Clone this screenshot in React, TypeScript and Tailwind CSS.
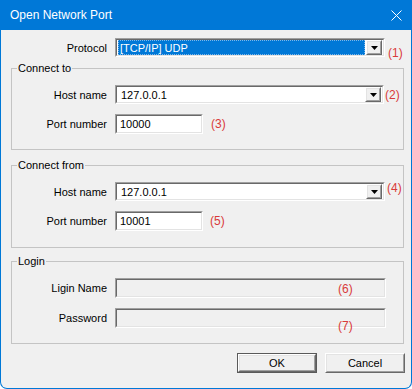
import React from "react";

const RED = "text-[#d93a3a]";
const LINE = "border-[#c4c4c4]";

function Sunken({
  className = "",
  innerClass = "bg-white",
  children,
}: {
  className?: string;
  innerClass?: string;
  children?: React.ReactNode;
}) {
  return (
    <div
      className={`border border-t-[#a0a0a0] border-l-[#a0a0a0] border-b-white border-r-white ${className}`}
    >
      <div
        className={`relative h-full w-full border border-t-[#696969] border-l-[#696969] border-b-[#e3e3e3] border-r-[#e3e3e3] ${innerClass}`}
      >
        {children}
      </div>
    </div>
  );
}

function Raised({
  className = "",
  children,
}: {
  className?: string;
  children?: React.ReactNode;
}) {
  return (
    <div
      className={`border border-t-white border-l-white border-b-[#696969] border-r-[#696969] bg-[#f0f0f0] ${className}`}
    >
      <div className="h-full w-full border border-t-[#e3e3e3] border-l-[#e3e3e3] border-b-[#a0a0a0] border-r-[#a0a0a0] flex items-center justify-center">
        {children}
      </div>
    </div>
  );
}

function DropBtn() {
  return (
    <Raised className="w-[16px] h-[15px] shrink-0">
      <svg width="7" height="4" viewBox="0 0 7 4">
        <polygon points="0,0 7,0 3.5,4" fill="#000" />
      </svg>
    </Raised>
  );
}

function Combo({
  value,
  selected = false,
  className = "",
}: {
  value: string;
  selected?: boolean;
  className?: string;
}) {
  return (
    <Sunken className={className}>
      <div className="flex h-full items-center pl-[1px] pr-[1px]">
        {selected ? (
          <div className="flex-1 h-[15px] bg-[#0078d7] text-white flex items-center pl-[1px] border border-dotted border-[#7fb7e8]">
            {value}
          </div>
        ) : (
          <div className="flex-1 pl-[3px]">{value}</div>
        )}
        <div className="ml-[1px]">
          <DropBtn />
        </div>
      </div>
    </Sunken>
  );
}

function Label({ children }: { children: React.ReactNode }) {
  return <div className="w-[95px] shrink-0 text-right">{children}</div>;
}

function Group({
  title,
  className = "",
  bodyClass = "",
  children,
}: {
  title: string;
  className?: string;
  bodyClass?: string;
  children: React.ReactNode;
}) {
  return (
    <div className={`flex flex-col ${className}`}>
      <div className="flex h-[14px]">
        <div className={`w-[6px] h-[7px] self-end border-l border-t ${LINE}`} />
        <div className="px-[1px] leading-[14px]">{title}</div>
        <div className={`flex-1 h-[7px] self-end border-r border-t ${LINE}`} />
      </div>
      <div className={`border-l border-r border-b ${LINE} ${bodyClass}`}>{children}</div>
    </div>
  );
}

export default function App() {
  return (
    <div
      className="w-[412px] h-[389px] bg-[#0078d7] flex flex-col rounded-b-[7px] overflow-hidden"
      style={{ fontFamily: '"Liberation Sans", Arial, sans-serif' }}
    >
      <div className="h-[30px] shrink-0 flex items-center justify-between pl-[10px] pr-[10px] text-white text-[12px]">
        <span>Open Network Port</span>
        <svg width="11" height="11" viewBox="0 0 11 11">
          <path d="M0.5 0.5 L10.5 10.5 M10.5 0.5 L0.5 10.5" stroke="#fff" strokeWidth="1" />
        </svg>
      </div>
      <div className="flex-1 mx-[1px] mb-[1px] bg-[#f0f0f0] rounded-b-[6px] flex flex-col pl-[10px] pr-[7px] text-[11px] text-black leading-[14px]">
        {/* Protocol */}
        <div className="flex items-start mt-[8px]">
          <div className="w-[96px] h-[19px] shrink-0 flex items-center justify-end">Protocol</div>
          <Combo value="[TCP/IP] UDP" selected className="ml-[8px] w-[270px] h-[19px]" />
          <span className={`ml-[3px] mt-[9px] text-[12px] leading-[12px] ${RED}`}>(1)</span>
        </div>

        {/* Connect to */}
        <Group title="Connect to" className="mt-[2px]" bodyClass="pb-[15px]">
          <div className="flex items-center mt-[10px]">
            <Label>Host name</Label>
            <Combo value="127.0.0.1" className="ml-[8px] w-[269px] h-[19px]" />
            <span className={`ml-[1px] text-[12px] ${RED}`}>(2)</span>
          </div>
          <div className="flex items-center mt-[10px]">
            <Label>Port number</Label>
            <Sunken className="ml-[8px] w-[88px] h-[20px]">
              <div className="h-full flex items-center pl-[3px]">10000</div>
            </Sunken>
            <span className={`ml-[8px] text-[12px] ${RED}`}>(3)</span>
          </div>
        </Group>

        {/* Connect from */}
        <Group title="Connect from" className="mt-[8px]" bodyClass="pb-[16px]">
          <div className="flex items-start mt-[10px]">
            <div className="w-[95px] h-[19px] shrink-0 flex items-center justify-end">Host name</div>
            <Combo value="127.0.0.1" className="ml-[8px] w-[270px] h-[19px]" />
            <span className={`ml-[2px] text-[12px] leading-[12px] ${RED}`}>(4)</span>
          </div>
          <div className="flex items-center mt-[10px]">
            <Label>Port number</Label>
            <Sunken className="ml-[8px] w-[88px] h-[20px]">
              <div className="h-full flex items-center pl-[3px]">10001</div>
            </Sunken>
            <span className={`ml-[7px] text-[12px] ${RED}`}>(5)</span>
          </div>
        </Group>

        {/* Login */}
        <Group title="Login" className="mt-[6px]" bodyClass="pb-[15px]">
          <div className="flex items-center mt-[10px]">
            <Label>Ligin Name</Label>
            <Sunken className="ml-[8px] w-[271px] h-[20px]" innerClass="bg-[#f0f0f0]">
              <span className={`absolute left-[221px] top-[2px] text-[12px] ${RED}`}>(6)</span>
            </Sunken>
          </div>
          <div className="flex items-center mt-[10px]">
            <Label>Password</Label>
            <Sunken className="ml-[8px] w-[271px] h-[20px]" innerClass="bg-[#f0f0f0]">
              <span className={`absolute left-[221px] top-[9px] text-[12px] ${RED}`}>(7)</span>
            </Sunken>
          </div>
        </Group>

        {/* Buttons */}
        <div className="flex justify-end gap-[8px] mt-[9px] -mr-[1px]">
          <div className="border border-[#5a5a5a]">
            <Raised className="w-[78px] h-[18px]">OK</Raised>
          </div>
          <Raised className="w-[80px] h-[20px]">Cancel</Raised>
        </div>
      </div>
    </div>
  );
}
